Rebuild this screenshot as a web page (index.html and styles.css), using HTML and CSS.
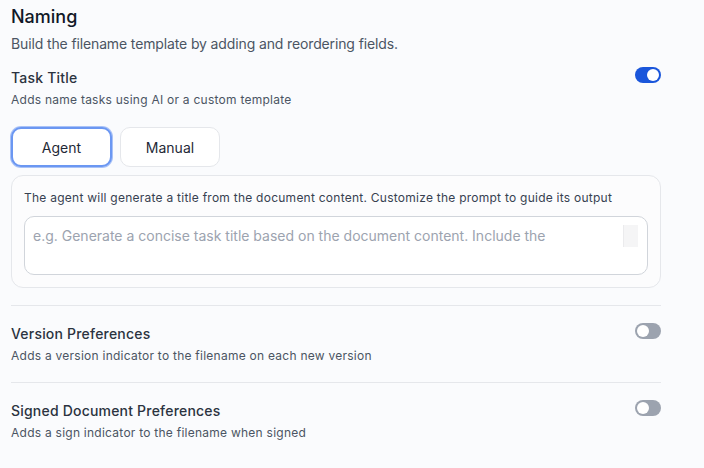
FILE: index.html
```html
<!DOCTYPE html>
<html lang="en">
<head>
<meta charset="utf-8">
<title>Naming</title>
<link rel="stylesheet" href="styles.css">
</head>
<body>
<main class="naming">
  <header class="naming-head">
    <h1 class="naming-title">Naming</h1>
    <p class="naming-sub">Build the filename template by adding and reordering fields.</p>
  </header>

  <section class="pref pref-first">
    <div class="pref-row">
      <div class="pref-text">
        <h2 class="pref-title">Task Title</h2>
        <p class="pref-desc">Adds name tasks using AI or a custom template</p>
      </div>
      <span class="switch switch-on" role="switch" aria-checked="true"><span class="knob"></span></span>
    </div>

    <div class="modes">
      <button class="mode mode-active" type="button">Agent</button>
      <button class="mode" type="button">Manual</button>
    </div>

    <div class="agent-card">
      <p class="agent-note">The agent will generate a title from the document content. Customize the prompt to guide its output</p>
      <div class="prompt">
        <span class="prompt-placeholder">e.g. Generate a concise task title based on the document content. Include the</span>
        <span class="prompt-scroll"></span>
      </div>
    </div>
  </section>

  <section class="pref">
    <div class="pref-row">
      <div class="pref-text">
        <h2 class="pref-title">Version Preferences</h2>
        <p class="pref-desc">Adds a version indicator to the filename on each new version</p>
      </div>
      <span class="switch" role="switch" aria-checked="false"><span class="knob"></span></span>
    </div>
  </section>

  <section class="pref">
    <div class="pref-row">
      <div class="pref-text">
        <h2 class="pref-title">Signed Document Preferences</h2>
        <p class="pref-desc">Adds a sign indicator to the filename when signed</p>
      </div>
      <span class="switch" role="switch" aria-checked="false"><span class="knob"></span></span>
    </div>
  </section>
</main>
</body>
</html>
```

FILE: styles.css
```css
* {
  box-sizing: border-box;
}

html,
body {
  margin: 0;
  height: 100%;
}

body {
  background: #fafbfd;
  font-family: Inter, "Noto Sans", "Liberation Sans", sans-serif;
  color: #1f2937;
}

.naming {
  width: 650px;
  margin-left: 11px;
  padding-top: 3px;
}

.naming-head {
  display: flex;
  flex-direction: column;
  gap: 3px;
}

.naming-title {
  margin: 0;
  font-size: 18px;
  line-height: 28px;
  font-weight: 500;
  color: #111827;
}

.naming-sub {
  margin: 0;
  font-size: 14px;
  line-height: 20px;
  letter-spacing: -0.13px;
  color: #4b5563;
}

/* preference rows */
.pref {
  border-top: 1px solid #e5e7eb;
  padding: 18px 0 18px;
}

.pref-first {
  border-top: 0;
  padding: 14px 0 17px;
}

.pref-row {
  display: flex;
  justify-content: space-between;
  align-items: flex-start;
}

.pref-text {
  display: flex;
  flex-direction: column;
  gap: 4px;
}

.pref-title {
  margin: 0;
  font-size: 14px;
  line-height: 20px;
  font-weight: 500;
  letter-spacing: 0.2px;
  color: #2b3340;
}

.pref-desc {
  margin: 0;
  font-size: 12px;
  line-height: 16px;
  letter-spacing: 0.25px;
  color: #4b5563;
}

/* toggle switch */
.switch {
  flex: none;
  width: 26px;
  height: 16px;
  margin-top: -1px;
  border-radius: 8px;
  background: #9ca3af;
  display: flex;
  align-items: center;
  padding: 0 2px;
}

.knob {
  width: 12px;
  height: 12px;
  border-radius: 50%;
  background: #ffffff;
}

.switch-on {
  background: #1a56db;
  justify-content: flex-end;
}

/* mode buttons */
.modes {
  display: flex;
  gap: 8px;
  margin-top: 19px;
}

.mode {
  width: 100px;
  height: 40px;
  border: 1px solid #e5e7eb;
  border-radius: 10px;
  background: #ffffff;
  font-family: inherit;
  font-size: 14px;
  color: #1f2937;
  padding: 0;
}

.mode-active {
  width: 101px;
  border: 2px solid #6b97f2;
  box-shadow: 0 0 0 1px #a9c2f7;
}

/* agent prompt card */
.agent-card {
  margin-top: 8px;
  border: 1px solid #e5e7eb;
  border-radius: 12px;
  background: #fcfcfd;
  padding: 13px 12px 12px;
  display: flex;
  flex-direction: column;
  gap: 9px;
}

.agent-note {
  margin: 0;
  font-size: 12px;
  line-height: 18px;
  letter-spacing: 0.25px;
  color: #374151;
}

.prompt {
  position: relative;
  height: 59px;
  border: 1px solid #d1d5db;
  border-radius: 10px;
  background: #ffffff;
  padding: 9px 8px;
  font-size: 14px;
  line-height: 20px;
}

.prompt-placeholder {
  color: #9ca3af;
}

.prompt-scroll {
  position: absolute;
  top: 8px;
  right: 9px;
  width: 15px;
  height: 22px;
  background: #f5f5f6;
  border-left: 1px solid #ebebed;
}
```
